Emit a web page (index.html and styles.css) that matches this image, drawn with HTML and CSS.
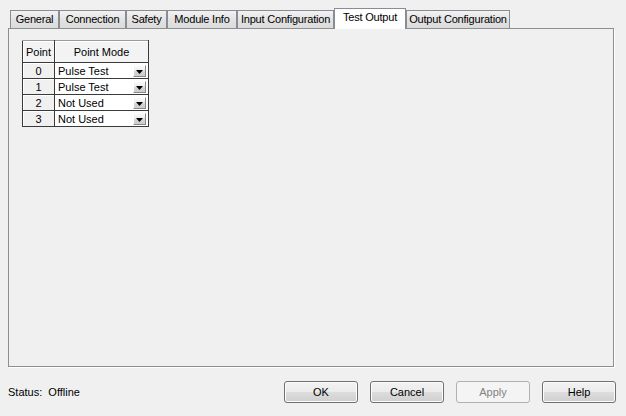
FILE: index.html
```html
<!DOCTYPE html>
<html>
<head>
<meta charset="utf-8">
<link rel="stylesheet" href="styles.css">
</head>
<body>
<div class="dialog">
  <div class="tabs">
    <div class="tab w-general">General</div>
    <div class="tab w-connection">Connection</div>
    <div class="tab w-safety">Safety</div>
    <div class="tab w-module">Module Info</div>
    <div class="tab w-input">Input Configuration</div>
    <div class="tab tab-active w-test">Test Output</div>
    <div class="tab w-output">Output Configuration</div>
  </div>
  <div class="panel">
    <table class="grid">
      <thead>
        <tr>
          <th class="col-point">Point</th>
          <th class="col-mode">Point Mode</th>
        </tr>
      </thead>
      <tbody>
        <tr><td class="num">0</td><td class="mode"><span>Pulse Test</span><span class="drop"><svg width="7" height="4" viewBox="0 0 7 4"><path d="M0 0H7L3.5 4Z" fill="#000"/></svg></span></td></tr>
        <tr><td class="num">1</td><td class="mode"><span>Pulse Test</span><span class="drop"><svg width="7" height="4" viewBox="0 0 7 4"><path d="M0 0H7L3.5 4Z" fill="#000"/></svg></span></td></tr>
        <tr><td class="num">2</td><td class="mode"><span>Not Used</span><span class="drop"><svg width="7" height="4" viewBox="0 0 7 4"><path d="M0 0H7L3.5 4Z" fill="#000"/></svg></span></td></tr>
        <tr><td class="num">3</td><td class="mode"><span>Not Used</span><span class="drop"><svg width="7" height="4" viewBox="0 0 7 4"><path d="M0 0H7L3.5 4Z" fill="#000"/></svg></span></td></tr>
      </tbody>
    </table>
  </div>
  <div class="footer">
    <div class="status">Status:&nbsp; Offline</div>
    <div class="buttons">
      <button class="btn">OK</button>
      <button class="btn">Cancel</button>
      <button class="btn" disabled>Apply</button>
      <button class="btn">Help</button>
    </div>
  </div>
</div>
</body>
</html>
```

FILE: styles.css
```css
html, body {
  margin: 0;
  padding: 0;
  background: #f0f0f0;
}
body {
  width: 626px;
  height: 416px;
  overflow: hidden;
  font-family: "Liberation Sans", Arial, sans-serif;
  font-size: 11px;
  color: #000;
}
.dialog {
  padding: 8px 0 0 8px;
}
.tabs {
  display: flex;
  align-items: flex-end;
  height: 20px;
  margin-left: 2px;
  position: relative;
  z-index: 2;
}
.tab {
  box-sizing: border-box;
  flex: none;
  height: 18px;
  border: 1px solid #898c95;
  border-bottom: none;
  background: linear-gradient(#f2f2f2, #e3e3e3 50%, #dbdbdb);
  text-align: center;
  line-height: 17px;
  white-space: nowrap;
  letter-spacing: -0.2px;
  overflow: hidden;
}
.tab-active {
  height: 21px;
  margin-bottom: -1px;
  background: #ffffff;
  line-height: 17px;
}
.w-general { width: 49px; }
.w-connection { width: 67px; }
.w-safety { width: 41px; }
.w-module { width: 70px; }
.w-input { width: 97px; }
.w-test { width: 72px; }
.w-output { width: 104px; }

.panel {
  box-sizing: border-box;
  width: 606px;
  height: 339px;
  border: 1px solid #8e8f92;
  box-shadow: 1px 1px 0 #ffffff;
  background: #f0f0f0;
  padding: 11px 0 0 13px;
  position: relative;
  z-index: 1;
}

.grid {
  border-collapse: collapse;
  border: 1px solid #7a7a7a;
  table-layout: fixed;
  font-size: 11px;
}
.grid th {
  height: 21px;
  padding: 0;
  font-weight: normal;
  background: #f3f3f3;
  border: 1px solid #3a3a3a;
  border-top-color: #9a9a9a;
  text-align: center;
  box-shadow: inset 1px 1px 0 #ffffff;
}
.col-point { width: 31px; }
.col-mode { width: 93px; }
.grid td {
  height: 15px;
  padding: 0;
  border: 1px solid #3a3a3a;
  line-height: 14px;
}
.grid td.num {
  background: #f0f0f0;
  text-align: center;
  box-shadow: inset 1px 1px 0 #ffffff;
}
.grid td.mode {
  background: #ffffff;
  padding-left: 3px;
}
.mode {
  position: relative;
}
.mode span:first-child {
  display: inline-block;
  vertical-align: top;
}
.drop {
  position: absolute;
  right: 2px;
  top: 2px;
  box-sizing: border-box;
  width: 13px;
  height: 12px;
  background: linear-gradient(#fbfbfb, #ececec 45%, #d6d6d6 55%, #cbcbcb);
  border-top: 1px solid #ffffff;
  border-left: 1px solid #ffffff;
  border-right: 1px solid #8a8a8a;
  border-bottom: 1px solid #8a8a8a;
  display: flex;
  align-items: flex-end;
  justify-content: center;
  padding-bottom: 2px;
}
.drop svg {
  display: block;
}

.footer {
  display: flex;
  align-items: center;
  width: 608px;
  margin-top: 14px;
}
.status {
  flex: none;
}
.buttons {
  margin-left: auto;
  display: flex;
  gap: 12px;
}
.btn {
  box-sizing: border-box;
  width: 74px;
  height: 22px;
  margin: 0;
  padding: 0;
  border: 1px solid #707070;
  border-radius: 3px;
  background: linear-gradient(#f2f2f2, #ebebeb 50%, #dddddd 51%, #cfcfcf);
  font-family: "Liberation Sans", Arial, sans-serif;
  font-size: 11px;
  color: #000;
  box-shadow: inset 0 0 0 1px #fcfcfc;
}
.btn:disabled {
  background: #f4f4f4;
  border-color: #adb2b5;
  color: #838383;
  box-shadow: none;
}
```
